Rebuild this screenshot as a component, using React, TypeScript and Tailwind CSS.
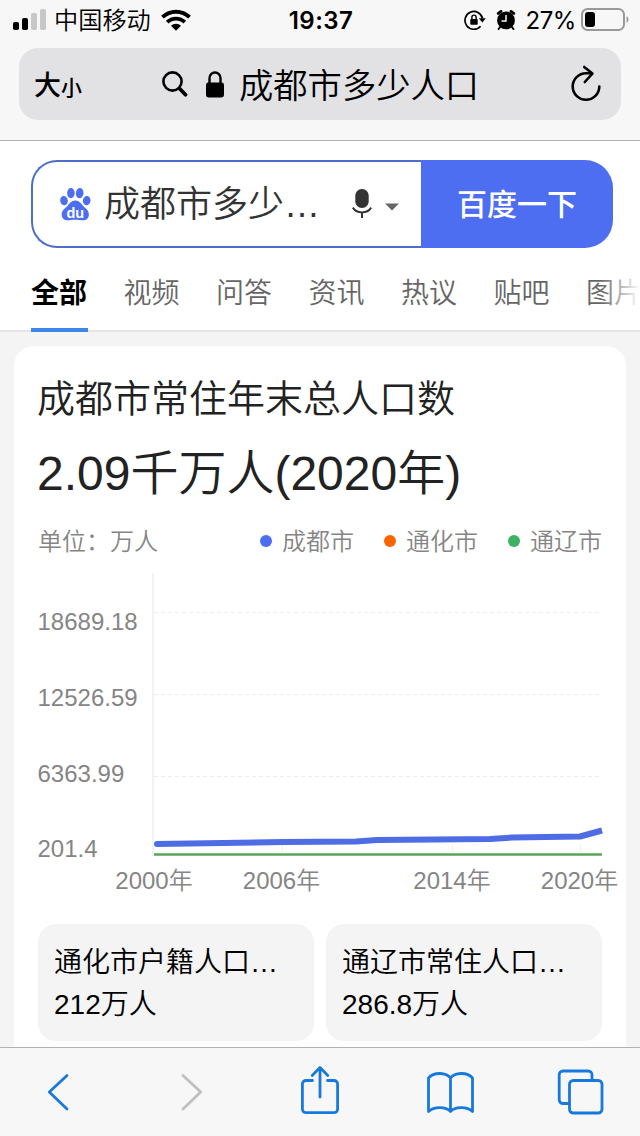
import React from 'react';

const TABS = ['全部', '视频', '问答', '资讯', '热议', '贴吧', '图片'];

const LEGEND = [
  { name: '成都市', dot: 'bg-[#4e6ef2]' },
  { name: '通化市', dot: 'bg-[#fa6400]' },
  { name: '通辽市', dot: 'bg-[#3bb264]' },
];

const Y_LABELS = [
  { text: '18689.18', y: 64 },
  { text: '12526.59', y: 140 },
  { text: '6363.99', y: 216 },
  { text: '201.4', y: 291 },
];

const X_LABELS = [
  { text: '2000年', x: 140 },
  { text: '2006年', x: 267.5 },
  { text: '2014年', x: 438 },
  { text: '2020年', x: 565.5 },
];

const RELATED = [
  { title: '通化市户籍人口…', value: '212万人' },
  { title: '通辽市常住人口…', value: '286.8万人' },
];

function StatusBar() {
  return (
    <div className="flex h-10 items-center justify-between pl-[13px] pr-[11px]">
      <div className="flex w-[220px] items-center">
        <svg width="34" height="22" viewBox="0 0 34 22">
          <rect x="0" y="13" width="6" height="8" rx="1.8" fill="#000" />
          <rect x="9" y="9" width="6" height="12" rx="1.8" fill="#000" />
          <rect x="18" y="4" width="6" height="17" rx="1.8" fill="#c7c7c7" />
          <rect x="27" y="0" width="6" height="21" rx="1.8" fill="#c7c7c7" />
        </svg>
        <span className="ml-[7px] pt-0.5 text-[24.2px] font-[350] leading-10">中国移动</span>
        <svg className="ml-[10px]" width="30" height="22" viewBox="0 0 30 22">
          <path d="M1.5 8.2a19.2 19.2 0 0 1 27 0" fill="none" stroke="#000" strokeWidth="4" />
          <path d="M6.2 13.2a12.4 12.4 0 0 1 17.6 0" fill="none" stroke="#000" strokeWidth="3.8" />
          <path d="M15 21.8l-5-5.1a7.2 7.2 0 0 1 10 0z" fill="#000" />
        </svg>
      </div>
      <span className="pt-0.5 font-[Inter] text-[24px] font-semibold leading-10 tracking-[0.5px]">19:37</span>
      <div className="flex w-[220px] items-center justify-end">
        <svg width="22" height="22" viewBox="0 0 22 22">
          <path d="M16.6 17.2A8.9 8.9 0 1 1 18.6 9.5" fill="none" stroke="#000" strokeWidth="1.7" />
          <path d="M14.8 9.2h7l-3.4 4.4z" fill="#000" />
          <rect x="6.3" y="10" width="7.4" height="5.8" rx="0.8" fill="#000" />
          <path d="M7.9 10V8.2a2.1 2.1 0 0 1 4.2 0V10" fill="none" stroke="#000" strokeWidth="1.4" />
        </svg>
        <svg className="ml-[10px]" width="20" height="20" viewBox="0 0 20 20">
          <circle cx="10" cy="10.4" r="8.9" fill="#000" />
          <path d="M2.2 3.4L5 1.4M17.8 3.4L15 1.4" stroke="#000" strokeWidth="2.8" strokeLinecap="round" />
          <path d="M4.5 16.5l-2 2.6M15.5 16.5l2 2.6" stroke="#000" strokeWidth="1.8" strokeLinecap="round" />
          <path d="M10 5v6H5.5" fill="none" stroke="#f7f7f7" strokeWidth="1.5" />
        </svg>
        <span className="ml-[9px] pt-0.5 font-[Inter] text-[24px] leading-10 tracking-[-0.4px]">27%</span>
        <svg className="ml-[5px]" width="48" height="24" viewBox="0 0 48 24">
          <rect x="1" y="1" width="42" height="21" rx="5.5" fill="none" stroke="#999" strokeWidth="2" />
          <rect x="4" y="4" width="10" height="15" rx="3" fill="#000" />
          <path d="M45.5 8.2c2.6 1 2.6 5.6 0 6.6z" fill="#999" />
        </svg>
      </div>
    </div>
  );
}

function AddressBar() {
  return (
    <div className="mx-[19px] mt-2 flex h-[72px] items-center rounded-[19px] bg-[#e2e2e4] pl-[15px] pr-[19px]">
      <div className="flex w-[128px] items-baseline pt-1 font-medium">
        <span className="text-[27px]">大</span>
        <span className="text-[21px]">小</span>
      </div>
      <svg width="26" height="27" viewBox="0 0 26 27">
        <circle cx="10.5" cy="10.5" r="9.1" fill="none" stroke="#000" strokeWidth="2.6" />
        <path d="M17.5 17.5l6 6.2" stroke="#000" strokeWidth="3.8" strokeLinecap="round" />
      </svg>
      <svg className="ml-[18px]" width="18" height="27" viewBox="0 0 18 27">
        <rect x="0" y="11.5" width="18" height="15" rx="2.4" fill="#000" />
        <path d="M3.5 12V7a5.5 5.5 0 0 1 11 0v5" fill="none" stroke="#000" strokeWidth="2.4" />
      </svg>
      <span className="ml-[15px] pt-1 text-[34.3px] font-[350] leading-none">成都市多少人口</span>
      <svg className="ml-auto" width="32" height="38" viewBox="0 0 32 38">
        <path
          d="M21.5 8.2H16A13.3 13.3 0 1 0 29.3 21.5M14.2 2l8.2 6.6-7.6 8.4"
          fill="none"
          stroke="#000"
          strokeWidth="2.6"
          strokeLinecap="round"
          strokeLinejoin="round"
        />
      </svg>
    </div>
  );
}

function PawLogo() {
  return (
    <svg width="31" height="33" viewBox="0 0 31 33" fill="#4e6ef2">
      <ellipse cx="4" cy="12.6" rx="3.8" ry="4.7" transform="rotate(-8 4 12.6)" />
      <ellipse cx="10.9" cy="5.1" rx="3.8" ry="5.1" />
      <ellipse cx="19.7" cy="5.1" rx="3.8" ry="5.1" transform="rotate(6 19.7 5.1)" />
      <ellipse cx="26.7" cy="12.6" rx="3.8" ry="4.7" transform="rotate(8 26.7 12.6)" />
      <path d="M15.3 12.6c4.2 0 5.7 3.2 8.2 5.6 2.6 2.5 5.4 4.4 5.4 8.3 0 3.6-2.4 5.8-5.9 5.8-2.8 0-4.8-.5-7.7-.5s-4.9.5-7.7.5c-3.5 0-5.9-2.2-5.9-5.8 0-3.9 2.8-5.8 5.4-8.3 2.5-2.4 4-5.6 8.2-5.6z" />
      <text x="15.3" y="29.5" textAnchor="middle" fill="#fff" fontSize="14.5" fontWeight="700">
        du
      </text>
    </svg>
  );
}

function SearchBox() {
  return (
    <div className="ml-[31px] mr-[27px] flex h-[88px]">
      <div className="flex w-[390px] items-center rounded-l-[26px] border-2 border-r-0 border-[#4e6ec8] pl-[27px]">
        <PawLogo />
        <span className="ml-[13px] pt-0.5 text-[36px] font-[350] leading-none text-[#333]">成都市多少…</span>
        <svg className="ml-auto" width="20" height="30" viewBox="0 0 20 30">
          <rect x="3.3" y="0" width="13.4" height="19" rx="6.5" fill="#333" />
          <path d="M.8 18.6c4.2 6.4 14.2 6.4 18.4 0M10 23v6" fill="none" stroke="#333" strokeWidth="2" />
        </svg>
        <svg className="ml-[13px] mr-[22px] mt-1.5" width="14" height="8" viewBox="0 0 14 8">
          <path d="M0 0.5h14l-7 7z" fill="#666" />
        </svg>
      </div>
      <button className="flex-1 rounded-r-[28px] bg-[#4e6ef2] text-[30px] font-medium text-white">
        百度一下
      </button>
    </div>
  );
}

function Tabs() {
  return (
    <div className="relative flex h-[84px] gap-[36.5px] overflow-hidden border-b-2 border-[#e6e6e6] pl-[31px] text-[28px] leading-[92px]">
      {TABS.map((tab, i) => (
        <span key={tab} className={i === 0 ? 'shrink-0 font-bold text-black' : 'shrink-0 font-[350] text-[#666]'}>
          {tab}
        </span>
      ))}
      <div className="absolute right-0 top-0 h-20 w-10 bg-gradient-to-r from-white/0 to-white" />
    </div>
  );
}

function PopulationChart() {
  return (
    <svg className="block" width="612" height="345" viewBox="0 0 612 345">
      <path d="M139 7v283" stroke="#f2f2f2" strokeWidth="2" />
      {[46.5, 128.5, 210.5].map((y) => (
        <path key={y} d={`M140 ${y}h446`} stroke="#ececec" strokeWidth="1" strokeDasharray="4 3" />
      ))}
      <path d="M268.5 279v6M438.5 279v6M566.5 279v6" stroke="#eee" strokeWidth="1" />
      <path d="M140 288.5h448" stroke="#5ba55a" strokeWidth="2.6" />
      <path
        d="M143 278L270 276L342 275.5L363 274L476 273L498 271.5L566 270.5L588 264.5"
        fill="none"
        stroke="#4e6de4"
        strokeWidth="6"
        strokeLinejoin="round"
      />
      <circle cx="143" cy="278" r="3" fill="#4e6de4" />
      <g fill="#858585" fontSize="24" className="font-[350]">
        {Y_LABELS.map(({ text, y }) => (
          <text key={text} x="23.5" y={y}>
            {text}
          </text>
        ))}
        {X_LABELS.map(({ text, x }) => (
          <text key={text} x={x} y="323" textAnchor="middle">
            {text}
          </text>
        ))}
      </g>
    </svg>
  );
}

function ResultCard() {
  return (
    <section className="mx-[14px] mt-[14px] h-[720px] rounded-[20px] bg-white font-[350]">
      <h2 className="pl-[23px] pt-[25px] text-[38px] font-[350] leading-[56px] text-[#222]">成都市常住年末总人口数</h2>
      <p className="mt-[15px] pl-[23px] text-[48px] leading-[64px] text-[#222]">2.09千万人(2020年)</p>
      <div className="mt-[15px] flex h-10 items-center px-6 text-[24px] text-[#858585]">
        <span className="pt-px">单位：万人</span>
        <div className="ml-auto flex gap-[30px]">
          {LEGEND.map(({ name, dot }) => (
            <span key={name} className="flex items-center gap-[10px]">
              <i className={`h-3 w-3 rounded-full ${dot}`} />
              <span className="pt-px">{name}</span>
            </span>
          ))}
        </div>
      </div>
      <div className="mt-[5px]">
        <PopulationChart />
      </div>
      <div className="mt-[13px] flex gap-3 px-6">
        {RELATED.map(({ title, value }) => (
          <div key={title} className="h-[117px] flex-1 rounded-[18px] bg-[#f4f4f4] px-4 pt-[18px] text-[28px] leading-[42px]">
            <div>{title}</div>
            <div>{value}</div>
          </div>
        ))}
      </div>
    </section>
  );
}

function Toolbar() {
  return (
    <nav className="h-[89px] border-t border-[#b2b2b2] bg-[#f7f7f8]">
      <svg
        width="640"
        height="88"
        viewBox="0 0 640 88"
        fill="none"
        stroke="#1879dc"
        strokeWidth="2.8"
        strokeLinecap="round"
        strokeLinejoin="round"
      >
        <path d="M67 27.5L49.3 44 67 61" />
        <path d="M183 27.5L200.7 44 183 61" stroke="#bfbfbf" />
        <path d="M312.5 32.5H306a3.6 3.6 0 0 0-3.6 3.6v25a3.6 3.6 0 0 0 3.6 3.6h28a3.6 3.6 0 0 0 3.6-3.6v-25a3.6 3.6 0 0 0-3.6-3.6h-6.5M320 49V20M312.2 27.5L320 19.5l7.8 8" />
        <path d="M450.5 30c-4-5.5-16.5-6.5-22 0v33.5c5.5-5.5 18-5 22 0 4-5 16.5-5.5 22 0V30c-5.5-6.5-18-5.5-22 0zM450.5 30v33.5" />
        <path d="M569 55.5h-6a3.8 3.8 0 0 1-3.8-3.8V26.8a3.8 3.8 0 0 1 3.8-3.8h25.2a3.8 3.8 0 0 1 3.8 3.8V32" />
        <rect x="569.5" y="32.5" width="32.5" height="32.5" rx="3.8" />
      </svg>
    </nav>
  );
}

export default function App() {
  return (
    <div className="flex h-[1136px] w-[640px] flex-col overflow-hidden bg-[#f4f4f4] font-['Liberation_Sans','Noto_Sans_CJK_SC',sans-serif] text-black">
      <header className="h-[141px] shrink-0 border-b border-[#b2b2b2] bg-[#f7f7f7]">
        <StatusBar />
        <AddressBar />
      </header>
      <main className="min-h-0 flex-1 overflow-hidden">
        <div className="bg-white pt-[19px]">
          <SearchBox />
          <div className="relative">
            <Tabs />
            <div className="absolute bottom-0 left-[31px] h-1 w-[57px] bg-[#3c87e8]" />
          </div>
        </div>
        <ResultCard />
      </main>
      <Toolbar />
    </div>
  );
}
